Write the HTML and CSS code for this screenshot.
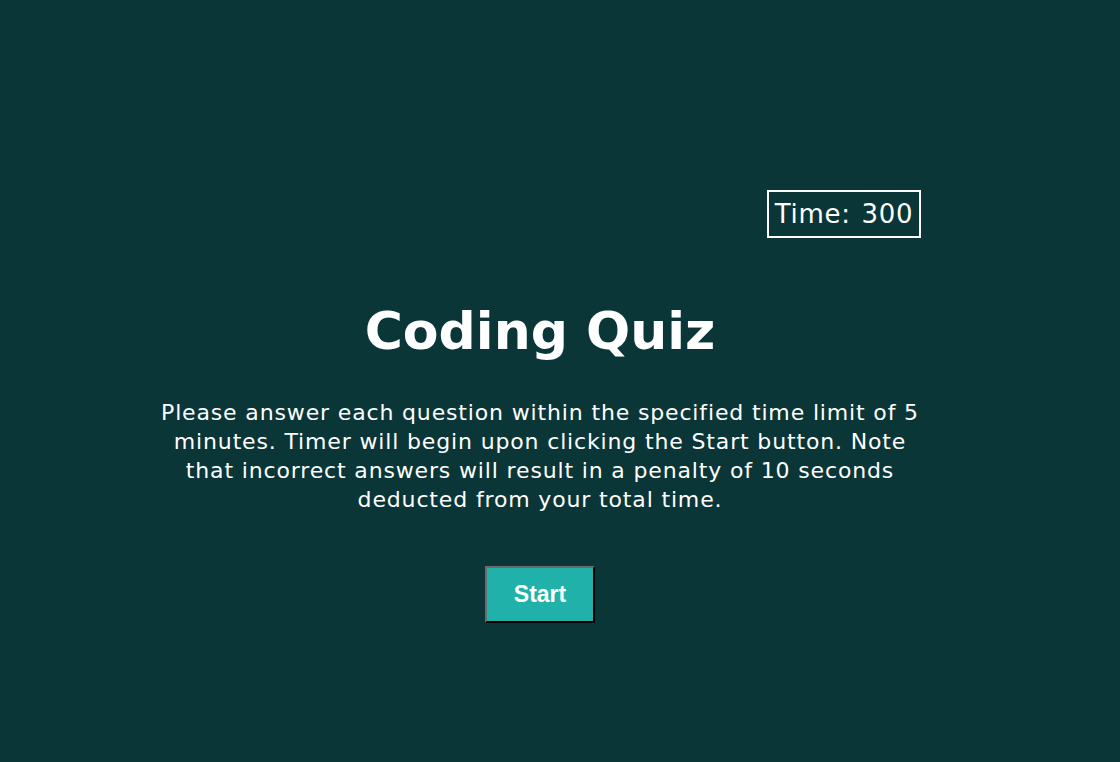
FILE: index.html
```html
<!DOCTYPE html>
<html>
<head>
<meta charset="utf-8">
<link rel="stylesheet" href="styles.css">
</head>
<body>
<div class="page">
  <header class="top">
    <div class="timer">Time: <span>300</span></div>
  </header>
  <main class="intro">
    <h1 class="title">Coding Quiz</h1>
    <p class="desc">Please answer each question within the specified time limit of 5 minutes. Timer will begin upon clicking the Start button. Note that incorrect answers will result in a penalty of 10 seconds deducted from your total time.</p>
    <button class="start">Start</button>
  </main>
</div>
</body>
</html>
```

FILE: styles.css
```css
html, body {
  margin: 0;
  padding: 0;
  height: 100%;
}
body {
  background: #0a3638;
  color: #ffffff;
  font-family: "DejaVu Sans", Verdana, sans-serif;
}
.page {
  width: 800px;
  margin-left: 140px;
  padding-top: 190px;
  display: flex;
  flex-direction: column;
  align-items: center;
}
.top {
  align-self: stretch;
  display: flex;
  justify-content: flex-end;
  padding-right: 19px;
}
.timer {
  border: 2px solid #ffffff;
  font-size: 26px;
  letter-spacing: 0.7px;
  word-spacing: 2px;
  line-height: 44px;
  padding: 0 4px;
  width: 142px;
  text-align: center;
}
.intro {
  display: flex;
  flex-direction: column;
  align-items: center;
}
.title {
  font-size: 52px;
  font-weight: bold;
  margin: 52px 0 0;
  line-height: 82px;
}
.desc {
  width: 775px;
  margin: 26px 0 0;
  font-size: 22px;
  letter-spacing: 0.85px;
  line-height: 29px;
  text-align: center;
}
.start {
  margin-top: 52px;
  width: 110px;
  height: 57px;
  background: #20b2aa;
  color: #ffffff;
  font-family: "Liberation Sans", Arial, sans-serif;
  font-weight: bold;
  font-size: 23px;
  border: 2px solid;
  border-color: #6b6b6b #000000 #000000 #6b6b6b;
  padding: 0;
}
```
